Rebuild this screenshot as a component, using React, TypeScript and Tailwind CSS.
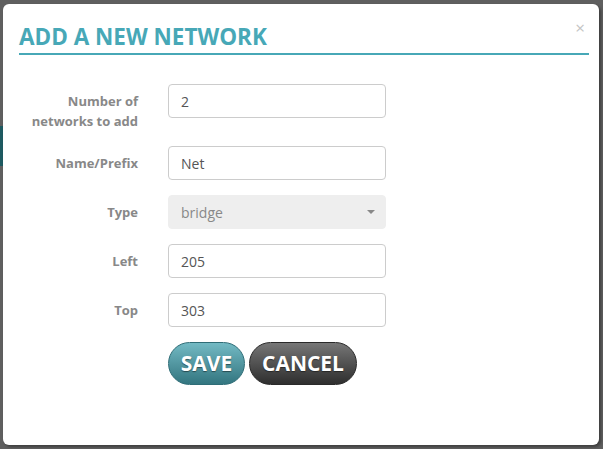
const fieldClass =
  'h-[34px] w-[218px] rounded-[4px] border border-[#cccccc] bg-white px-3 text-[14px] text-[#555555] outline-none';

interface RowProps {
  label: React.ReactNode;
  children: React.ReactNode;
}

function FormRow({ label, children }: RowProps) {
  return (
    <div className="mb-[15px] flex items-start">
      <label className="w-[135px] shrink-0 pt-[7px] text-right text-[13px] font-bold leading-[20px] text-[#888888]">
        {label}
      </label>
      <div className="ml-[30px]">{children}</div>
    </div>
  );
}

export default function App() {
  return (
    <div
      className="flex h-[449px] w-[603px] bg-[#5f5f5f]"
      style={{ fontFamily: '"Open Sans", "Liberation Sans", sans-serif' }}
    >
      {/* backdrop content peeking at the left */}
      <div className="flex w-[3px] shrink-0 flex-col pt-[126px]">
        <div className="h-[40px] bg-[#1e5a61]" />
      </div>

      {/* Modal */}
      <div className="mt-[4px] h-[441px] w-[596px] rounded-[6px] bg-white shadow-[2px_2px_3px_rgba(0,0,0,0.35)]">
        {/* Header */}
        <div className="flex items-start pl-4 pr-[14px] pt-[19px]">
          <div className="flex-1 border-b-2 border-[#47a8b7] pb-[2px]">
            <h2 className="text-[22.5px] font-bold leading-[28px] text-[#47a8b7]">
              ADD A NEW NETWORK
            </h2>
          </div>
          <button className="ml-[-14px] mt-[-5px] text-[17px] leading-[20px] text-[#c4c4c4]">×</button>
        </div>

        {/* Form */}
        <div className="pt-[29px]">
          <FormRow
            label={
              <>
                Number of
                <br />
                networks to add
              </>
            }
          >
            <input className={fieldClass} defaultValue="2" />
          </FormRow>
          <FormRow label="Name/Prefix">
            <input className={fieldClass} defaultValue="Net" />
          </FormRow>
          <FormRow label="Type">
            <div className="flex h-[34px] w-[218px] items-center justify-between rounded-[4px] border border-[#eeeeee] bg-[#eeeeee] pl-3 pr-[10px] text-[14px] text-[#888888]">
              <span>bridge</span>
              <svg width="8" height="4" viewBox="0 0 8 4">
                <path d="M0 0 L8 0 L4 4 Z" fill="#888888" />
              </svg>
            </div>
          </FormRow>
          <FormRow label="Left">
            <input className={fieldClass} defaultValue="205" />
          </FormRow>
          <FormRow label="Top">
            <input className={fieldClass} defaultValue="303" />
          </FormRow>

          {/* Actions */}
          <div className="ml-[165px] flex gap-[4px]">
            <button className="h-[43px] w-[77px] rounded-full border border-[#2f6d77] bg-gradient-to-b from-[#73bac4] to-[#337680] text-[21px] font-bold text-white [text-shadow:0_1px_1px_rgba(0,0,0,0.45)]">
              SAVE
            </button>
            <button className="h-[43px] w-[108px] rounded-full border border-[#2a2a2a] bg-gradient-to-b from-[#777777] to-[#2f2f2f] text-[21px] font-bold text-white [text-shadow:0_1px_1px_rgba(0,0,0,0.45)]">
              CANCEL
            </button>
          </div>
        </div>
      </div>
    </div>
  );
}
